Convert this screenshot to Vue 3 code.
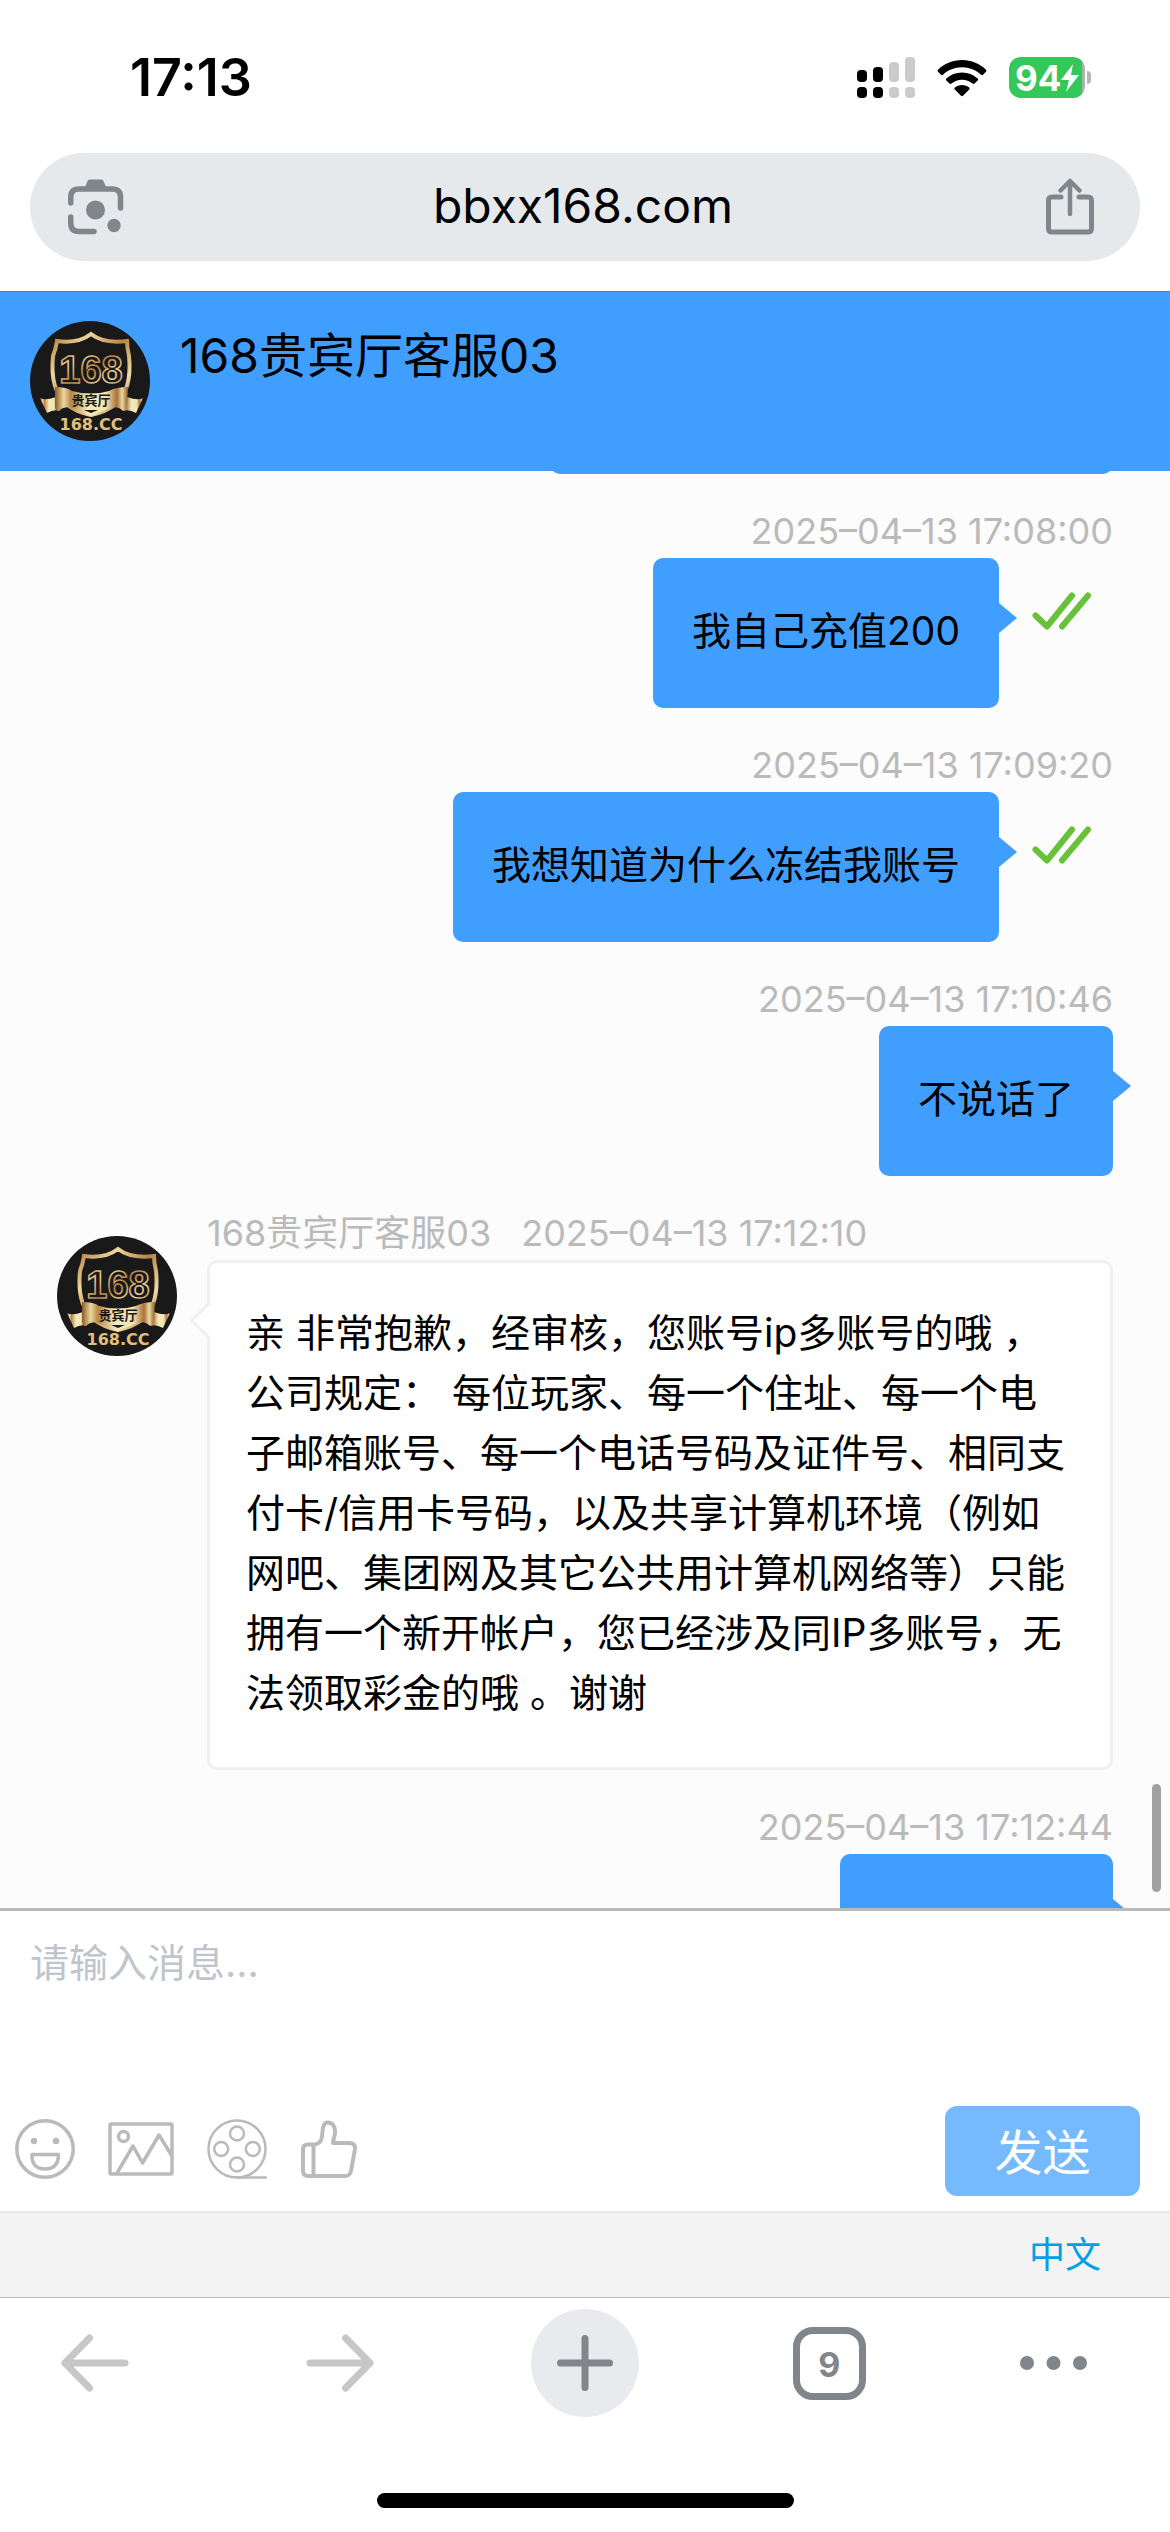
<template>
  <div class="page">
    <!-- status bar -->
    <div class="status">
      <span class="clock">17:13</span>
      <div class="status-icons">
        <svg class="signal" viewBox="0 0 58 42">
          <g fill="#000">
            <rect x="0" y="13" width="10" height="12" rx="4" />
            <rect x="16" y="10" width="10" height="15" rx="4" />
            <rect x="0" y="30" width="10" height="11" rx="4" />
            <rect x="16" y="30" width="10" height="11" rx="4" />
          </g>
          <g fill="#cbcbcb">
            <rect x="32" y="5" width="10" height="20" rx="4" />
            <rect x="48" y="0" width="10" height="25" rx="4" />
            <rect x="32" y="30" width="10" height="11" rx="4" />
            <rect x="48" y="30" width="10" height="11" rx="4" />
          </g>
        </svg>
        <svg class="wifi" viewBox="0 0 50 38">
          <path d="M25 1C15.500 1 7 4.800 1 10.700Q0 11.800 1 12.800L4 15.800Q5 16.600 6 15.700C11 11 17.600 8.200 25 8.200S39 11 44 15.700Q45 16.600 46 15.800L49 12.800Q50 11.800 49 10.700C43 4.800 34.500 1 25 1Z" />
          <path d="M25 13.500C19 13.500 13.500 15.800 9.300 19.500Q8.300 20.500 9.300 21.500L12.500 24.600Q13.500 25.400 14.500 24.600C17.300 22.200 21 20.700 25 20.700S32.700 22.200 35.500 24.600Q36.500 25.400 37.500 24.600L40.700 21.500Q41.700 20.500 40.700 19.500C36.500 15.800 31 13.500 25 13.500Z" />
          <path d="M25 26C22.200 26 19.700 27 17.800 28.600Q16.800 29.500 17.800 30.500L24 36.800Q25 37.600 26 36.800L32.200 30.500Q33.200 29.500 32.200 28.600C30.300 27 27.800 26 25 26Z" />
        </svg>
        <div class="battery">
          <span class="level">94</span>
          <svg class="bolt" viewBox="0 0 18 28">
            <path d="M12 0L0 16H8L5 28L18 11H10Z" fill="#fff" />
          </svg>
        </div>
      </div>
    </div>

    <!-- address bar -->
    <div class="browser-bar">
      <div class="address">
        <button class="icon-btn" aria-label="Lens">
          <svg class="lens" viewBox="0 0 56 56" fill="none" stroke="#80868b" stroke-width="5.500" stroke-linecap="round">
            <path d="M2.750 24V18Q2.750 10 11 10H44Q52.500 10 52.500 18V29" />
            <path d="M2.750 38V44Q2.750 52.500 11 52.500H26" />
            <path d="M17 8L19.500 2Q20 0.500 22 0.500H33Q35 0.500 35.500 2L38 8Z" fill="#80868b" stroke="none" />
            <circle cx="27.500" cy="31" r="9.500" fill="#80868b" stroke="none" />
            <circle cx="46" cy="46.500" r="6.700" fill="#80868b" stroke="none" />
          </svg>
        </button>
        <span class="url">bbxx168.com</span>
        <button class="icon-btn" aria-label="Share">
          <svg class="share" viewBox="0 0 50 58" fill="none" stroke="#80868b" stroke-width="5" stroke-linecap="round" stroke-linejoin="round">
            <path d="M16 19H7Q3.500 19 3.500 22.500V50.500Q3.500 54 7 54H43Q46.500 54 46.500 50.500V22.500Q46.500 19 43 19H34" />
            <path d="M25 36V4M15.500 12.500L25 3L34.500 12.500" stroke-width="4.500" />
          </svg>
        </button>
      </div>
    </div>

    <!-- chat header -->
    <header class="chat-head">
      <svg class="avatar"><use href="#badge" /></svg>
      <h1 class="chat-title">{{ agent }}</h1>
    </header>

    <!-- messages -->
    <main class="chat">
      <div class="prev-bubble"></div>
      <div v-for="msg in messages" :key="msg.time" class="msg" :class="{ mine: msg.mine }">
        <svg v-if="!msg.mine" class="avatar"><use href="#badge" /></svg>
        <div class="msg-body">
          <div class="meta">
            <span v-if="!msg.mine" class="sender">{{ agent }}</span>
            <time>{{ msg.time }}</time>
          </div>
          <div class="bubble-row">
            <div class="bubble">{{ msg.text }}</div>
            <svg v-if="msg.read" class="ticks" viewBox="0 0 60 38" fill="none" stroke="#67c23a" stroke-width="6" stroke-linecap="round" stroke-linejoin="round">
              <path d="M3.500 23.500L15 34.500L40 3.500" />
              <path d="M30 34.500L56 3.500" />
            </svg>
          </div>
        </div>
      </div>
      <div class="scroll-thumb"></div>
    </main>

    <!-- input -->
    <section class="composer">
      <textarea v-model="draft" class="draft" placeholder="请输入消息..." aria-label="请输入消息"></textarea>
      <div class="tools">
        <button class="tool" aria-label="表情">
          <svg viewBox="0 0 60 60" class="i-face" fill="none" stroke="#bababa" stroke-width="3.500">
            <circle cx="30" cy="30" r="28.200" />
            <path d="M17 35.500H43.500Q43.500 50 30 50T17 35.500Z" stroke-linejoin="round" />
            <circle cx="19" cy="22" r="3.200" fill="#bababa" stroke="none" />
            <circle cx="41" cy="22" r="3.200" fill="#bababa" stroke="none" />
          </svg>
        </button>
        <button class="tool" aria-label="图片">
          <svg viewBox="0 0 66 60" class="i-pic" fill="none" stroke="#bababa" stroke-width="3.500">
            <rect x="2" y="5" width="62" height="50" rx="1" />
            <circle cx="15.500" cy="17.500" r="5" />
            <path d="M9 54L25 27L34.500 44L51 16L64 37" stroke-linejoin="round" />
          </svg>
        </button>
        <button class="tool" aria-label="视频">
          <svg viewBox="0 0 60 60" class="i-film" fill="none" stroke="#bababa" stroke-width="2.500">
            <circle cx="30" cy="30" r="28.500" />
            <circle cx="30" cy="14.500" r="7" />
            <circle cx="14.200" cy="30" r="7" />
            <circle cx="45.800" cy="30" r="7" />
            <circle cx="30" cy="45.500" r="7" />
            <path d="M30 58.500H59" stroke-linecap="round" />
          </svg>
        </button>
        <button class="tool" aria-label="点赞">
          <svg viewBox="0 0 58 60" class="i-like" fill="none" stroke="#bababa" stroke-width="4" stroke-linejoin="round">
            <path d="M14 25.500Q20 25 21.500 20C23 15 21.500 4 27 3.500C33 3 35 8 35 13C35 18 33 20 33 24H49Q55.500 24 55 30L51 52Q50 57 45 57H8Q3 57 3 52V30Q3 25.500 8 25.500Z" />
            <path d="M13.500 26V57" />
          </svg>
        </button>
        <button class="send" @click="send">发送</button>
      </div>
    </section>

    <footer class="lang">
      <a href="#">中文</a>
    </footer>

    <!-- browser toolbar -->
    <nav class="toolbar">
      <button class="nav-btn" aria-label="Back">
        <svg class="arrow" viewBox="0 0 68 58" fill="none" stroke="#c7c7c7" stroke-width="7" stroke-linecap="round" stroke-linejoin="round">
          <path d="M28.500 4L4 29L28.500 54M4 29H64" />
        </svg>
      </button>
      <button class="nav-btn" aria-label="Forward">
        <svg class="arrow" viewBox="0 0 68 58" fill="none" stroke="#c7c7c7" stroke-width="7" stroke-linecap="round" stroke-linejoin="round">
          <path d="M39.500 4L64 29L39.500 54M64 29H4" />
        </svg>
      </button>
      <button class="nav-btn plus" aria-label="New tab">
        <svg class="cross" viewBox="0 0 56 56" fill="none" stroke="#80868b" stroke-width="7" stroke-linecap="round">
          <path d="M28 3.500V52.500M3.500 28H52.500" />
        </svg>
      </button>
      <button class="nav-btn" aria-label="Tabs"><span class="tabs">9</span></button>
      <button class="nav-btn more" aria-label="More">
        <svg class="dots" viewBox="0 0 67 16" fill="#80868b">
          <circle cx="7" cy="8" r="7" />
          <circle cx="33.500" cy="8" r="7" />
          <circle cx="60" cy="8" r="7" />
        </svg>
      </button>
    </nav>
    <div class="home-bar"></div>

    <!-- agent badge, shared by both avatars -->
    <svg class="defs" aria-hidden="true">
      <defs>
        <linearGradient id="gold" x1="0" y1="0" x2="1" y2="1">
          <stop offset="0" stop-color="#b07a35" />
          <stop offset="0.250" stop-color="#efd59b" />
          <stop offset="0.500" stop-color="#b98543" />
          <stop offset="0.750" stop-color="#f0dba6" />
          <stop offset="1" stop-color="#9c6526" />
        </linearGradient>
        <linearGradient id="ribbon">
          <stop offset="0" stop-color="#8b5a26" />
          <stop offset="0.120" stop-color="#ecd9a0" />
          <stop offset="0.220" stop-color="#b78549" />
          <stop offset="0.450" stop-color="#f3e9bb" />
          <stop offset="0.700" stop-color="#f0e4b2" />
          <stop offset="0.850" stop-color="#a9713a" />
          <stop offset="0.920" stop-color="#ecd9a0" />
          <stop offset="1" stop-color="#8b5a26" />
        </linearGradient>
        <symbol id="badge" viewBox="0 0 120 120">
          <circle cx="60" cy="60" r="60" fill="#1a1919" />
          <path d="M61 13Q48 23 27 20Q26 27 23 35C21 55 24 72 36 83Q46 91 61 94Q76 91 86 83C98 72 101 55 99 35Q97 27 97 20Q74 23 61 13Z" fill="none" stroke="url(#gold)" stroke-width="4" />
          <text x="61" y="62" class="badge-num">168</text>
          <path d="M10 77Q15 80 26 76L30 90Q24 88 17 92Z" fill="url(#ribbon)" />
          <path d="M113 77Q108 80 97 76L92 90Q99 88 106 92Z" fill="url(#ribbon)" />
          <path d="M25 66Q37 66 42 70Q61 75 79 70Q86 66 98 66L97 86Q96 91 92 89Q88 85 81 87Q72 90 61 95Q50 90 42 87Q34 85 30 89Q26 91 25 86Z" fill="url(#ribbon)" />
          <path d="M54 89H68L61 92Z" fill="#1a1919" />
          <text x="61" y="84" class="badge-name">贵宾厅</text>
          <text x="61" y="109" class="badge-site">168.CC</text>
        </symbol>
      </defs>
    </svg>
  </div>
</template>

<script setup>
import { ref } from "vue";

const agent = "168贵宾厅客服03";
const draft = ref("");

const messages = ref([
  { time: "2025–04–13 17:08:00", text: "我自己充值200", mine: true, read: true },
  { time: "2025–04–13 17:09:20", text: "我想知道为什么冻结我账号", mine: true, read: true },
  { time: "2025–04–13 17:10:46", text: "不说话了", mine: true },
  {
    time: "2025–04–13 17:12:10",
    text: "亲 非常抱歉，经审核，您账号ip多账号的哦 ，公司规定： 每位玩家、每一个住址、每一个电子邮箱账号、每一个电话号码及证件号、相同支付卡/信用卡号码，以及共享计算机环境（例如网吧、集团网及其它公共用计算机网络等）只能拥有一个新开帐户，您已经涉及同IP多账号，无法领取彩金的哦 。谢谢",
  },
  { time: "2025–04–13 17:12:44", text: "", mine: true },
]);

const send = () => {
  if (!draft.value) return;
  messages.value.push({ time: new Date().toLocaleString(), text: draft.value, mine: true });
  draft.value = "";
};
</script>

<style>
body {
  background: #fff;
}
</style>

<style scoped>
.page {
  display: flex;
  flex-direction: column;
  height: 100vh;
  overflow: hidden;
  background: #fff;
  color: #000;
  font-family: Inter, "Noto Sans CJK SC", sans-serif;
}

button {
  display: flex;
  align-items: center;
  justify-content: center;
  padding: 0;
  border: 0;
  background: none;
  font-family: inherit;
  cursor: pointer;
}

.status {
  flex: none;
  display: flex;
  align-items: center;
  justify-content: space-between;
  box-sizing: border-box;
  height: 123px;
  padding: 32px 85px 0 130px;
}

.clock {
  font-size: 52px;
  font-weight: 600;
}

.status-icons {
  display: flex;
  align-items: center;
  gap: 22px;
}

.signal {
  width: 58px;
  height: 42px;
}

.wifi {
  width: 50px;
  height: 38px;
}

.battery {
  position: relative;
  display: flex;
  align-items: center;
  box-sizing: border-box;
  width: 76px;
  height: 41px;
  padding-left: 6px;
  border-radius: 12px;
  background: linear-gradient(to right, #34c759 73px, #a9b5ac 73px);
}

.battery::after {
  content: "";
  position: absolute;
  left: 78px;
  top: 14px;
  width: 4px;
  height: 13px;
  border-radius: 0 4px 4px 0;
  background: #b5b5b5;
}

.level {
  color: #fff;
  font-size: 35px;
  font-weight: 700;
}

.bolt {
  width: 18px;
  height: 28px;
}

.browser-bar {
  flex: none;
  padding: 30px;
}

.address {
  display: flex;
  align-items: center;
  justify-content: space-between;
  height: 108px;
  padding: 0 40px 0 36px;
  border-radius: 54px;
  background: #e5e9ec;
}

.icon-btn {
  width: 60px;
  height: 60px;
}

.lens {
  width: 56px;
  height: 56px;
}

.share {
  width: 50px;
  height: 58px;
}

.url {
  padding-bottom: 4px;
  font-size: 48px;
}

.chat-head {
  flex: none;
  display: flex;
  gap: 30px;
  box-sizing: border-box;
  height: 180px;
  padding: 29px 30px;
  border-top: 1px solid #3a86d2;
  background: #409eff;
}

.avatar {
  flex: none;
  width: 120px;
  height: 120px;
}

.chat-title {
  margin: 0;
  font-size: 48px;
  font-weight: 400;
  line-height: 70px;
}

.chat {
  position: relative;
  flex: 1;
  min-height: 0;
  overflow: hidden;
  padding: 0 57px;
  background: #fcfcfc;
}

/* end of the message that is scrolled under the header */
.prev-bubble {
  width: 563px;
  height: 60px;
  margin: -57px 0 0 auto;
  border-radius: 10px;
  background: #409eff;
}

.msg {
  display: flex;
  gap: 30px;
  margin-top: 30px;
}

.msg .avatar {
  margin-top: 30px;
}

.msg-body {
  flex: 1;
  min-width: 0;
}

.meta {
  display: flex;
  gap: 30px;
  color: #bababa;
  font-size: 36px;
  line-height: 54px;
}

.mine .meta {
  justify-content: flex-end;
}

.bubble-row {
  display: flex;
}

.mine .bubble-row {
  justify-content: flex-end;
}

.bubble {
  position: relative;
  box-sizing: border-box;
  padding: 40px 36px 44px;
  border: 3px solid #f0f0f0;
  border-radius: 10px;
  background: #fff;
  font-size: 39px;
  line-height: 60px;
}

.mine .bubble {
  min-height: 150px;
  border-color: #409eff;
  background: #409eff;
}

.mine .bubble:empty {
  width: 273px;
}

.bubble::before {
  content: "";
  position: absolute;
  left: -15px;
  top: 45px;
  width: 22px;
  height: 22px;
  border-left: 3px solid #f0f0f0;
  border-bottom: 3px solid #f0f0f0;
  background: #fff;
  transform: rotate(45deg);
}

.mine .bubble::before {
  left: auto;
  right: -21px;
  top: 42px;
  width: 0;
  height: 0;
  border: solid transparent;
  border-width: 15px 0 15px 18px;
  border-left-color: #409eff;
  background: none;
  transform: none;
}

.ticks {
  width: 60px;
  height: 38px;
  margin: 34px 21px 0 33px;
}

.scroll-thumb {
  position: absolute;
  right: 9px;
  bottom: 16px;
  width: 9px;
  height: 108px;
  border-radius: 5px;
  background: #a1a1a1;
}

.composer {
  flex: none;
  border-top: 3px solid #bababa;
  border-bottom: 3px solid #ebebeb;
}

.draft {
  display: block;
  box-sizing: border-box;
  width: 100%;
  height: 195px;
  padding: 22px 30px;
  border: 0;
  outline: 0;
  resize: none;
  background: none;
  font-family: inherit;
  font-size: 39px;
  line-height: 60px;
}

.draft::placeholder {
  color: #c0c4cc;
}

.tools {
  display: flex;
  gap: 33px;
  padding: 0 30px 15px 15px;
}

.tool {
  height: 86px;
}

.tool svg {
  display: block;
  height: 60px;
}

.i-face,
.i-film {
  width: 60px;
}

.i-pic {
  width: 66px;
}

.i-like {
  width: 58px;
}

.send {
  box-sizing: border-box;
  width: 195px;
  height: 90px;
  margin-left: auto;
  padding-bottom: 4px;
  border-radius: 12px;
  background: #75baff;
  color: #fff;
  font-size: 48px;
}

.lang {
  flex: none;
  display: flex;
  justify-content: flex-end;
  padding: 0 69px;
  border-bottom: 1px solid #bbb;
  background: #f3f3f3;
  font-size: 36px;
  line-height: 83px;
}

.lang a {
  color: #009fe8;
  text-decoration: none;
}

.toolbar {
  flex: none;
  display: flex;
  justify-content: space-between;
  padding: 11px 83px 0 41px;
}

.nav-btn {
  width: 108px;
  height: 108px;
}

.nav-btn.more {
  width: 67px;
}

.plus {
  border-radius: 50%;
  background: #e8eaed;
}

.arrow {
  width: 68px;
  height: 58px;
}

.cross {
  width: 56px;
  height: 56px;
}

.dots {
  width: 67px;
  height: 16px;
}

.tabs {
  box-sizing: border-box;
  width: 73px;
  height: 73px;
  border: 7px solid #80868b;
  border-radius: 20px;
  color: #80868b;
  font-size: 34px;
  font-weight: 700;
  line-height: 62px;
}

.home-bar {
  flex: none;
  width: 417px;
  height: 15px;
  margin: 76px auto 24px;
  border-radius: 8px;
  background: #000;
}

.defs {
  position: absolute;
  width: 0;
  height: 0;
}

.badge-num {
  fill: #1a1919;
  stroke: url(#gold);
  stroke-width: 1.5px;
  font-family: "Liberation Sans", sans-serif;
  font-size: 38px;
  font-weight: 700;
  text-anchor: middle;
}

.badge-name {
  fill: #1a1919;
  font-family: "Noto Sans CJK SC", sans-serif;
  font-size: 13px;
  font-weight: 700;
  text-anchor: middle;
}

.badge-site {
  fill: #e3bf7c;
  font-family: "DejaVu Sans", sans-serif;
  font-size: 16px;
  font-weight: 700;
  text-anchor: middle;
}
</style>
